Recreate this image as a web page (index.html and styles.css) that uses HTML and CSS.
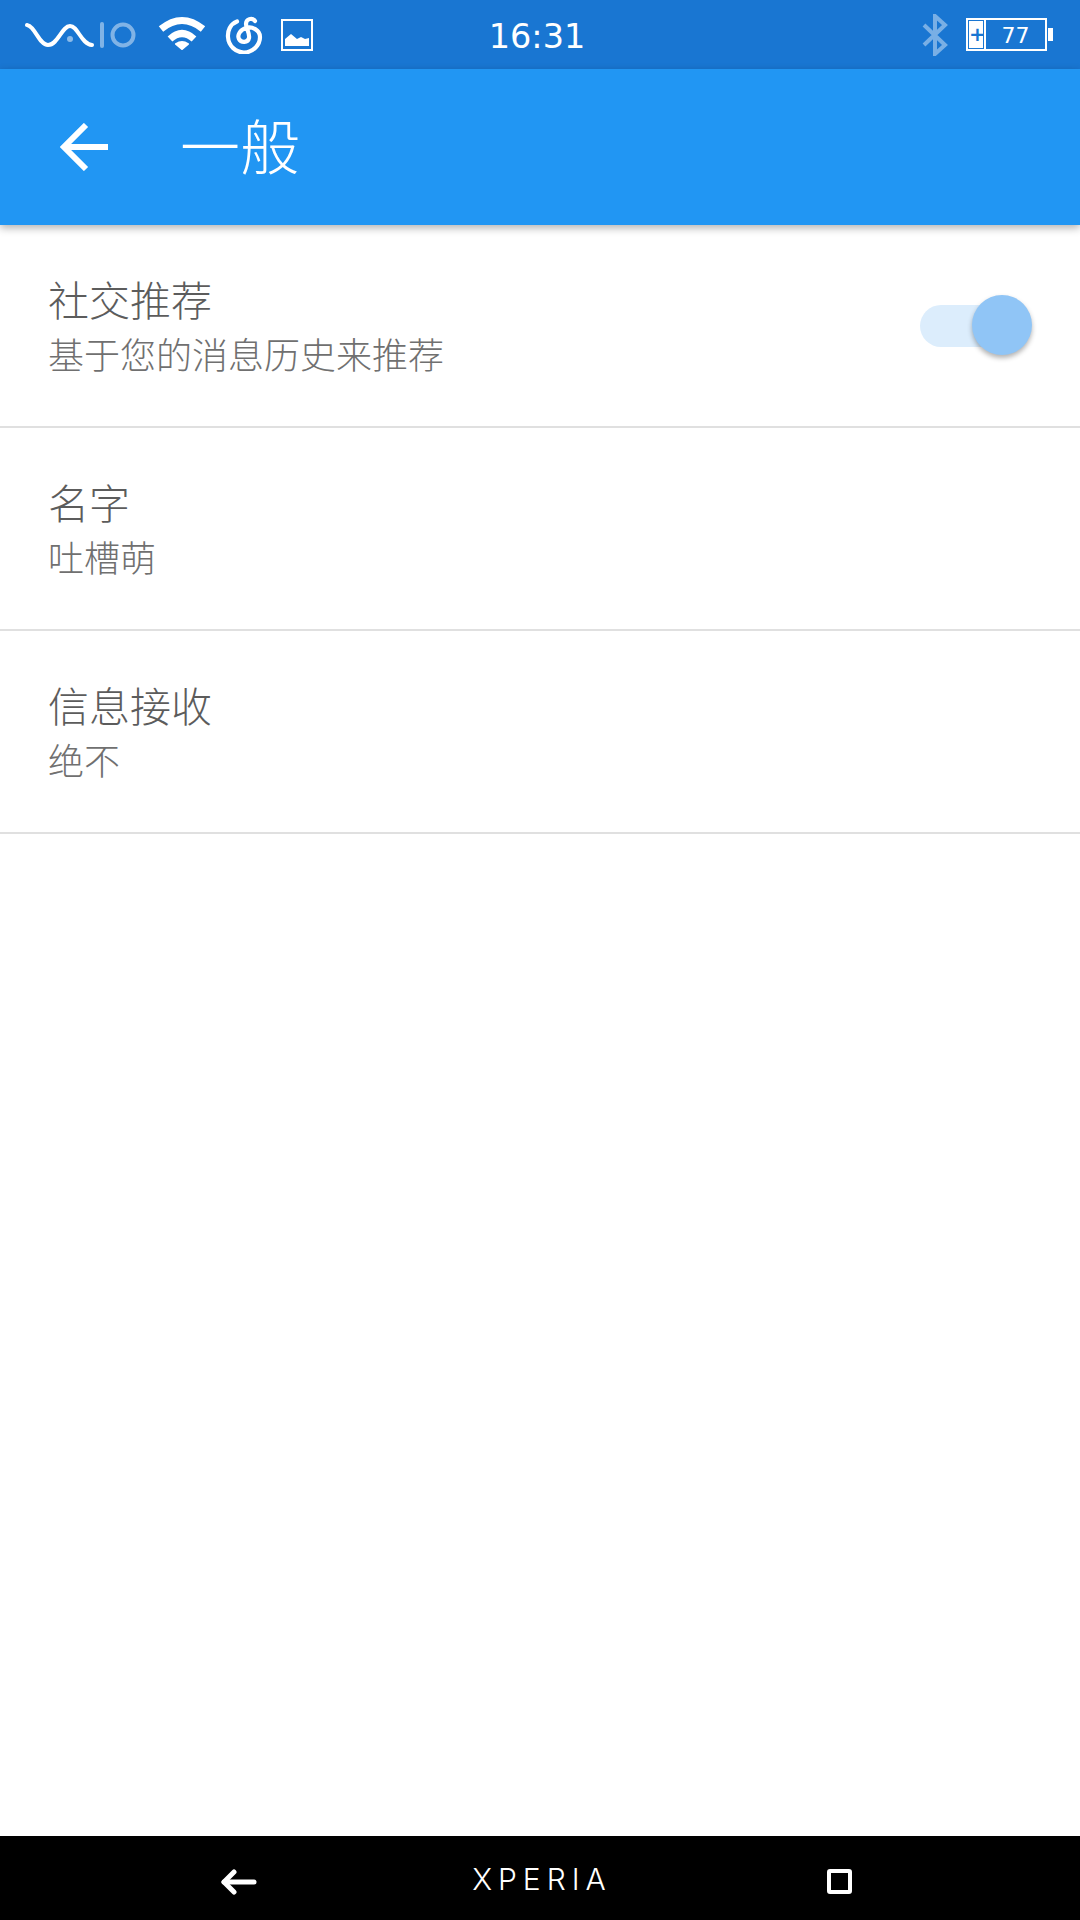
FILE: index.html
```html
<!DOCTYPE html>
<html lang="zh-CN">
<head>
    <meta charset="UTF-8">
    <meta name="viewport" content="width=device-width, initial-scale=1.0">
    <title>一般</title>
    <link rel="stylesheet" href="styles.css">
</head>
<body>
    <div class="status-bar">
        <div class="status-left">
            <svg class="icon-vaio" width="112" height="28" viewBox="0 0 112 28" fill="none" stroke="#fff" stroke-linecap="round">
                <path d="M2 4 C10 5 14 24 23 24 C33 24 37 5 45 5 C53 5 56 23 67 24" stroke-width="4"/>
                <circle cx="45" cy="18" r="3" fill="#fff" fill-opacity=".5" stroke="none"/>
                <path d="M77 3 V25" stroke-width="4" stroke-opacity=".45"/>
                <circle cx="98" cy="14" r="10.5" stroke-width="4" stroke-opacity=".45"/>
            </svg>
            <svg class="icon-wifi" width="48" height="34" viewBox="0 0 48 34" fill="none" stroke="#fff" stroke-width="7" stroke-linejoin="round">
                <path d="M3 13 Q24 -4 45 13"/>
                <path d="M12 23 Q24 12 36 23"/>
                <path d="M18 28 Q24 24 30 28 L24 33 Z" fill="#fff" stroke-width="2"/>
            </svg>
            <svg class="icon-music" width="38" height="38" viewBox="0 0 38 38" fill="none" stroke="#fff" stroke-width="4.200" stroke-linecap="round">
                <path d="M12 5.500 C5 8 2.500 15 3 21 C3.500 30 11 36.500 19 36.500 C28 36.500 35 29 35 21 C35 14 27 10 21 12 C15 14 12 19 14 23 C16 27 23 27 24 22 C25 17 21 13 21 8 C21 3 27 1 30 5"/>
            </svg>
            <svg class="icon-image" width="32" height="32" viewBox="0 0 32 32">
                <rect x="1" y="1" width="30" height="30" fill="none" stroke="#fff" stroke-width="2"/>
                <path d="M4 27 V20 L10 15 L16 20 L20 18 L24 20 L28 19 V27 Z" fill="#fff"/>
            </svg>
        </div>
        <div class="status-time">16:31</div>
        <div class="status-right">
            <svg class="icon-bluetooth" width="26" height="42" viewBox="0 0 26 42" fill="none" stroke="#fff" stroke-opacity=".42" stroke-width="4">
                <path d="M2 11 L23 31 L13 40 V2 L23 11 L2 31"/>
            </svg>
            <div class="battery">
                <div class="battery-body">
                    <div class="battery-charge">+</div>
                    <div class="battery-level">77</div>
                </div>
                <div class="battery-nub"></div>
            </div>
        </div>
    </div>

    <header class="app-bar">
        <svg class="back-arrow" width="48" height="48" viewBox="0 0 48 48" fill="none" stroke="#fff" stroke-width="6">
            <path d="M48 24 H4"/>
            <path d="M26 2 L4 24 L26 46"/>
        </svg>
        <h1>一般</h1>
    </header>

    <main class="settings">
        <div class="row">
            <div class="row-text">
                <div class="row-title">社交推荐</div>
                <div class="row-sub">基于您的消息历史来推荐</div>
            </div>
            <div class="switch">
                <div class="switch-track"></div>
                <div class="switch-thumb"></div>
            </div>
        </div>
        <div class="row">
            <div class="row-text">
                <div class="row-title">名字</div>
                <div class="row-sub">吐槽萌</div>
            </div>
        </div>
        <div class="row">
            <div class="row-text">
                <div class="row-title">信息接收</div>
                <div class="row-sub">绝不</div>
            </div>
        </div>
    </main>

    <footer class="nav-bar">
        <svg width="36" height="26" viewBox="0 0 36 26" fill="none" stroke="#fff" stroke-width="5" stroke-linecap="round" stroke-linejoin="round">
            <path d="M33 13 H3"/>
            <path d="M13 3 L3 13 L13 23"/>
        </svg>
        <div class="nav-brand">XPERIA</div>
        <div class="nav-square"></div>
    </footer>
</body>
</html>
```
FILE: styles.css
```css
body {
    margin: 0;
    height: 1920px;
    display: flex;
    flex-direction: column;
    background-color: #fff;
    font-family: 'Noto Sans CJK SC', 'Noto Sans', sans-serif;
    overflow: hidden;
}

.status-bar {
    height: 69px;
    flex-shrink: 0;
    display: flex;
    align-items: center;
    padding: 0 27px 0 25px;
    background-color: #1976d2;
    color: #fff;
}

.status-left {
    flex: 1;
    display: flex;
    align-items: center;
}

.icon-vaio {
    margin-right: 21px;
}

.icon-wifi {
    margin-right: 19px;
    margin-bottom: 3px;
}

.icon-music {
    margin-right: 18px;
}

.status-time {
    margin: 4px 4px 0 0;
    font-family: 'DejaVu Sans', sans-serif;
    font-size: 33.5px;
}

.status-right {
    flex: 1;
    display: flex;
    align-items: center;
    justify-content: flex-end;
    gap: 18px;
}

.battery {
    display: flex;
    align-items: center;
}

.battery-body {
    width: 81px;
    height: 33px;
    box-sizing: border-box;
    display: flex;
    border: 2px solid #fff;
}

.battery-charge {
    width: 14px;
    margin: 1px;
    background-color: #fff;
    color: #1976d2;
    font-family: 'DejaVu Sans', sans-serif;
    font-size: 20px;
    font-weight: 700;
    line-height: 27px;
    text-align: center;
}

.battery-level {
    flex: 1;
    border-left: 2px solid #fff;
    font-family: 'DejaVu Sans', sans-serif;
    font-size: 22px;
    line-height: 31px;
    text-align: center;
}

.battery-nub {
    width: 5px;
    height: 13px;
    margin-left: 1px;
    background-color: #fff;
}

.app-bar {
    height: 156px;
    flex-shrink: 0;
    display: flex;
    align-items: center;
    padding-left: 60px;
    background-color: #2196f3;
    box-shadow: 0 3px 8px rgba(0, 0, 0, 0.3);
    position: relative;
}

.app-bar h1 {
    margin: 0 0 8px 72px;
    font-size: 60px;
    font-weight: 300;
    color: #fff;
}

.settings {
    flex: 1;
}

.row {
    height: 201px;
    display: flex;
    align-items: center;
    justify-content: space-between;
    padding: 0 48px;
    border-bottom: 2px solid #e0e0e0;
}

.row-title {
    font-size: 41px;
    font-weight: 300;
    line-height: 55px;
    color: #5c5c5c;
}

.row-sub {
    font-size: 36px;
    font-weight: 300;
    line-height: 55px;
    color: #707070;
}

.switch {
    width: 112px;
    height: 62px;
    position: relative;
}

.switch-track {
    position: absolute;
    left: 0;
    top: 10px;
    width: 96px;
    height: 42px;
    border-radius: 21px;
    background-color: #dcedfc;
}

.switch-thumb {
    position: absolute;
    right: 0;
    top: 0;
    width: 60px;
    height: 60px;
    border-radius: 50%;
    background-color: #90c5f6;
    box-shadow: 0 3px 5px rgba(0, 0, 0, 0.3);
}

.nav-bar {
    height: 84px;
    box-sizing: border-box;
    flex-shrink: 0;
    display: flex;
    align-items: center;
    justify-content: space-between;
    padding: 7px 228px 0 221px;
    background-color: #000;
}

.nav-brand {
    margin-bottom: 5px;
    font-family: 'Inter', sans-serif;
    font-weight: 300;
    font-size: 30px;
    letter-spacing: 6px;
    color: #fff;
}

.nav-square {
    width: 25px;
    height: 25px;
    box-sizing: border-box;
    border: 4px solid #fff;
    border-radius: 3px;
}
```
